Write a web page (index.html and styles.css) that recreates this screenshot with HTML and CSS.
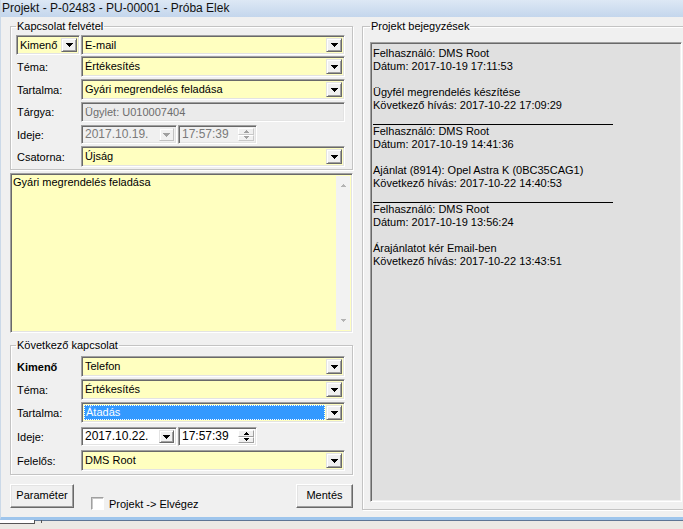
FILE: index.html
```html
<!DOCTYPE html>
<html lang="hu">
<head>
<meta charset="utf-8">
<title>Projekt - P-02483</title>
<link rel="stylesheet" href="styles.css">
</head>
<body>
<svg class="defs" width="0" height="0" aria-hidden="true">
  <symbol id="tri" viewBox="0 0 7 4"><path d="M0 0h7v1h-1v1h-1v1h-1v1h-1v-1h-1v-1h-1v-1h-1z"/></symbol>
  <symbol id="up" viewBox="0 0 5 3"><path d="M2 0h1v1h1v1h1v1h-5v-1h1v-1h1z"/></symbol>
  <symbol id="dn" viewBox="0 0 5 3"><path d="M0 0h5v1h-1v1h-1v1h-1v-1h-1v-1h-1z"/></symbol>
</svg>
<div class="window">
  <div class="titlebar">Projekt - P-02483 - PU-00001 - Próba Elek</div>
  <div class="main">
    <div class="left">
      <fieldset class="group g1">
        <legend>Kapcsolat felvétel</legend>
        <div class="row r1">
          <div class="combo small"><span class="val">Kimenő</span><span class="btn"><svg class="arrow"><use href="#tri"/></svg></span></div>
          <div class="combo wide gap1"><span class="val">E-mail</span><span class="btn"><svg class="arrow"><use href="#tri"/></svg></span></div>
        </div>
        <div class="row r2">
          <span class="lbl">Téma:</span>
          <div class="combo wide"><span class="val">Értékesítés</span><span class="btn"><svg class="arrow"><use href="#tri"/></svg></span></div>
        </div>
        <div class="row r3">
          <span class="lbl">Tartalma:</span>
          <div class="combo wide"><span class="val">Gyári megrendelés feladása</span><span class="btn"><svg class="arrow"><use href="#tri"/></svg></span></div>
        </div>
        <div class="row r4">
          <span class="lbl">Tárgya:</span>
          <div class="edit wide disabled"><span class="val">Ügylet: U010007404</span></div>
        </div>
        <div class="row r5">
          <span class="lbl">Ideje:</span>
          <div class="date disabled"><span class="val">2017.10.19.</span><span class="btn"><svg class="arrow"><use href="#tri"/></svg></span></div>
          <div class="time disabled"><span class="val">17:57:39</span><span class="spin"><span class="sb"><svg class="sa"><use href="#up"/></svg></span><span class="sb"><svg class="sa"><use href="#dn"/></svg></span></span></div>
        </div>
        <div class="row r6">
          <span class="lbl">Csatorna:</span>
          <div class="combo wide"><span class="val">Újság</span><span class="btn"><svg class="arrow"><use href="#tri"/></svg></span></div>
        </div>
      </fieldset>

      <div class="memo">
        <div class="memo-text">Gyári megrendelés feladása</div>
        <div class="vscroll">
          <svg class="sarrow"><use href="#up"/></svg>
          <svg class="sarrow"><use href="#dn"/></svg>
        </div>
      </div>

      <fieldset class="group g2">
        <legend>Következő kapcsolat</legend>
        <div class="row s1">
          <span class="lbl bold">Kimenő</span>
          <div class="combo wide"><span class="val">Telefon</span><span class="btn"><svg class="arrow"><use href="#tri"/></svg></span></div>
        </div>
        <div class="row s2">
          <span class="lbl">Téma:</span>
          <div class="combo wide"><span class="val">Értékesítés</span><span class="btn"><svg class="arrow"><use href="#tri"/></svg></span></div>
        </div>
        <div class="row s3">
          <span class="lbl">Tartalma:</span>
          <div class="combo wide focus"><span class="val sel"><span class="focusrect">Átadás</span></span><span class="btn"><svg class="arrow"><use href="#tri"/></svg></span></div>
        </div>
        <div class="row s4">
          <span class="lbl">Ideje:</span>
          <div class="date"><span class="val">2017.10.22.</span><span class="btn"><svg class="arrow"><use href="#tri"/></svg></span></div>
          <div class="time"><span class="val">17:57:39</span><span class="spin"><span class="sb"><svg class="sa"><use href="#up"/></svg></span><span class="sb"><svg class="sa"><use href="#dn"/></svg></span></span></div>
        </div>
        <div class="row s5">
          <span class="lbl">Felelős:</span>
          <div class="combo wide"><span class="val">DMS Root</span><span class="btn"><svg class="arrow"><use href="#tri"/></svg></span></div>
        </div>
      </fieldset>

      <div class="actions">
        <button class="button param" type="button">Paraméter</button>
        <label class="check"><span class="box"></span><span>Projekt -&gt; Elvégez</span></label>
        <button class="button save" type="button">Mentés</button>
      </div>
    </div>

    <fieldset class="group right">
      <legend>Projekt bejegyzések</legend>
      <div class="log">
        <div class="ln">Felhasználó: DMS Root</div>
        <div class="ln">Dátum: 2017-10-19 17:11:53</div>
        <div class="ln">&nbsp;</div>
        <div class="ln">Ügyfél megrendelés készítése</div>
        <div class="ln">Következő hívás: 2017-10-22 17:09:29</div>
        <div class="sep"></div>
        <div class="ln">Felhasználó: DMS Root</div>
        <div class="ln">Dátum: 2017-10-19 14:41:36</div>
        <div class="ln">&nbsp;</div>
        <div class="ln">Ajánlat (8914): Opel Astra K (0BC35CAG1)</div>
        <div class="ln">Következő hívás: 2017-10-22 14:40:53</div>
        <div class="sep"></div>
        <div class="ln">Felhasználó: DMS Root</div>
        <div class="ln">Dátum: 2017-10-19 13:56:24</div>
        <div class="ln">&nbsp;</div>
        <div class="ln">Árajánlatot kér Email-ben</div>
        <div class="ln">Következő hívás: 2017-10-22 13:43:51</div>
      </div>
    </fieldset>
  </div>
</div>
<div class="strip"><span class="stripbox"></span><span class="stripmark"></span></div>
</body>
</html>
```

FILE: styles.css
```css
* { box-sizing: border-box; }
html, body { margin: 0; padding: 0; }
body {
  width: 683px;
  height: 529px;
  overflow: hidden;
  background: #ebe9e4;
  font-family: "Liberation Sans", Arial, sans-serif;
  font-size: 11px;
  color: #000;
}
.defs { position: absolute; width: 0; height: 0; }

.window {
  height: 520px;
  background: #f0f0f0;
  border-left: 1px solid #cbd9e8;
  border-bottom: 3px solid #9ec5ec;
  box-shadow: 0 1px 0 #5d7593;
  overflow: hidden;
}
.titlebar {
  height: 17px;
  line-height: 16px;
  padding-left: 1px;
  font-size: 12px;
  color: #111;
  background: linear-gradient(#dde8f5, #c4d6ec);
  white-space: nowrap;
}
.main {
  display: flex;
  gap: 9px;
  padding: 3px 0 0 9px;
}
.left { width: 343px; flex: none; }

.group {
  margin: 0;
  border: 1px solid #c3c3c3;
  box-shadow: inset 1px 1px 0 #fff, 1px 1px 0 #fff;
  min-width: 0;
}
.group legend {
  padding: 0 1px;
  line-height: 13px;
  font-size: 11px;
}
.g1 { padding: 0 5px 2px 5px; }
.g2 { padding: 0 5px 3px 5px; margin-top: 6px; }

.row { display: flex; align-items: center; }
.r1 { margin-top: 2px; }
.r2 { margin-top: 1px; }
.r3 { margin-top: 2px; }
.r4 { margin-top: 2px; }
.r5 { margin-top: 3px; }
.r6 { margin-top: 2px; }
.s1 { margin-top: 4px; }
.s2 { margin-top: 2px; }
.s3 { margin-top: 2px; }
.s4 { margin-top: 4px; }
.s5 { margin-top: 4px; }

.lbl { width: 65px; padding-left: 1px; flex: none; white-space: nowrap; }
.bold { font-weight: bold; }

.combo, .edit, .date, .time {
  display: flex;
  height: 21px;
  padding: 2px;
  border: 1px solid;
  border-color: #a0a0a0 #fff #fff #a0a0a0;
  box-shadow: inset 1px 1px 0 #696969, inset -1px -1px 0 #e3e3e3;
  background: #ffffc0;
  flex: none;
}
.combo.small { width: 64px; height: 20px; }
.r1 .combo { height: 20px; }
.wide { width: 264px; }
.gap1 { margin-left: 1px; }
.val {
  flex: 1;
  min-width: 0;
  line-height: 15px;
  padding-left: 1px;
  white-space: nowrap;
  overflow: hidden;
}
.r1 .val { line-height: 14px; }
.val.sel {
  background: #3399ff;
  color: #fff;
  margin-right: 1px;
  padding: 0;
}
.focusrect {
  display: block;
  height: 15px;
  line-height: 13px;
  padding-left: 1px;
  border: 1px dotted #fff;
}
.btn {
  width: 16px;
  flex: none;
  display: flex;
  align-items: center;
  justify-content: center;
  background: #f0f0f0;
  border: 1px solid;
  border-color: #e3e3e3 #696969 #696969 #e3e3e3;
  box-shadow: inset 1px 1px 0 #fff, inset -1px -1px 0 #a0a0a0;
}
.arrow { width: 7px; height: 4px; fill: #000; }

.edit { height: 20px; }
.edit.disabled { background: #ebebeb; color: #6d6d6d; }
.edit .val { line-height: 14px; }

.date { width: 96px; height: 19px; background: #fff; }
.time { width: 79px; height: 19px; background: #fff; margin-left: 1px; }
.date .val, .time .val { line-height: 13px; font-size: 12px; }
.date .btn { width: 15px; }
.disabled.date, .disabled.time { background: #f0f0f0; color: #7a7a7a; }
.disabled .arrow { fill: #a0a0a0; }
.disabled .btn { box-shadow: inset 1px 1px 0 #fff; border-color: #f0f0f0 #c0c0c0 #c0c0c0 #f0f0f0; }

.spin { width: 16px; display: flex; flex-direction: column; flex: none; }
.sb {
  flex: 1;
  display: flex;
  align-items: center;
  justify-content: center;
  background: #f0f0f0;
  border: 1px solid;
  border-color: #fff #a0a0a0 #a0a0a0 #fff;
}
.sa { width: 5px; height: 3px; fill: #000; }
.disabled .sa { fill: #a0a0a0; }
.disabled .sb { border-color: #fff #c8c8c8 #c8c8c8 #fff; }

.memo {
  margin-top: 3px;
  height: 160px;
  display: flex;
  padding: 2px;
  border: 1px solid;
  border-color: #a0a0a0 #fff #fff #a0a0a0;
  box-shadow: inset 1px 1px 0 #696969, inset -1px -1px 0 #e3e3e3;
  background: #ffffc0;
}
.memo-text { flex: 1; padding: 0; line-height: 13px; }
.vscroll {
  width: 14px;
  flex: none;
  background: #f2f2f2;
  display: flex;
  flex-direction: column;
  justify-content: space-between;
  align-items: center;
  padding: 8px 0 8px;
}
.sarrow { width: 5px; height: 3px; fill: #b4b4b4; }

.actions {
  margin-top: 9px;
  display: flex;
  align-items: flex-start;
}
.button {
  height: 24px;
  margin: 0;
  padding: 0 0 2px;
  font-family: inherit;
  font-size: 11px;
  color: #000;
  background: #f0f0f0;
  border: 1px solid;
  border-color: #fff #696969 #696969 #fff;
  box-shadow: inset -1px -1px 0 #a0a0a0, inset 1px 1px 0 #e3e3e3;
}
.param { width: 64px; }
.save { width: 57px; margin-left: auto; }
.check {
  display: flex;
  align-items: center;
  gap: 5px;
  margin: 13px 0 0 17px;
}
.box {
  width: 13px;
  height: 13px;
  background: #fff;
  border: 1px solid;
  border-color: #a0a0a0 #fff #fff #a0a0a0;
  box-shadow: inset 1px 1px 0 #c8c8c8;
}

.right {
  width: 330px;
  flex: none;
  height: 490px;
  padding: 0 0 0 7px;
}
.log {
  margin-top: 9px;
  width: 312px;
  height: 460px;
  background: #e0e0e0;
  border: 1px solid;
  border-color: #a0a0a0 #fff #fff #a0a0a0;
  box-shadow: inset 1px 1px 0 #696969, inset -1px -1px 0 #f0f0f0;
  padding: 4px 0 0 2px;
}
.ln { height: 13px; line-height: 13px; white-space: nowrap; }
.sep { width: 240px; height: 13px; border-bottom: 1px solid #000; }

.strip {
  display: flex;
  align-items: flex-start;
  height: 5px;
}
.stripbox {
  width: 35px;
  height: 4px;
  background: #fff;
  border-right: 1px solid #555;
  border-bottom: 1px solid #555;
}
.stripmark { width: 1px; height: 3px; background: #555; margin-left: 6px; }
```
